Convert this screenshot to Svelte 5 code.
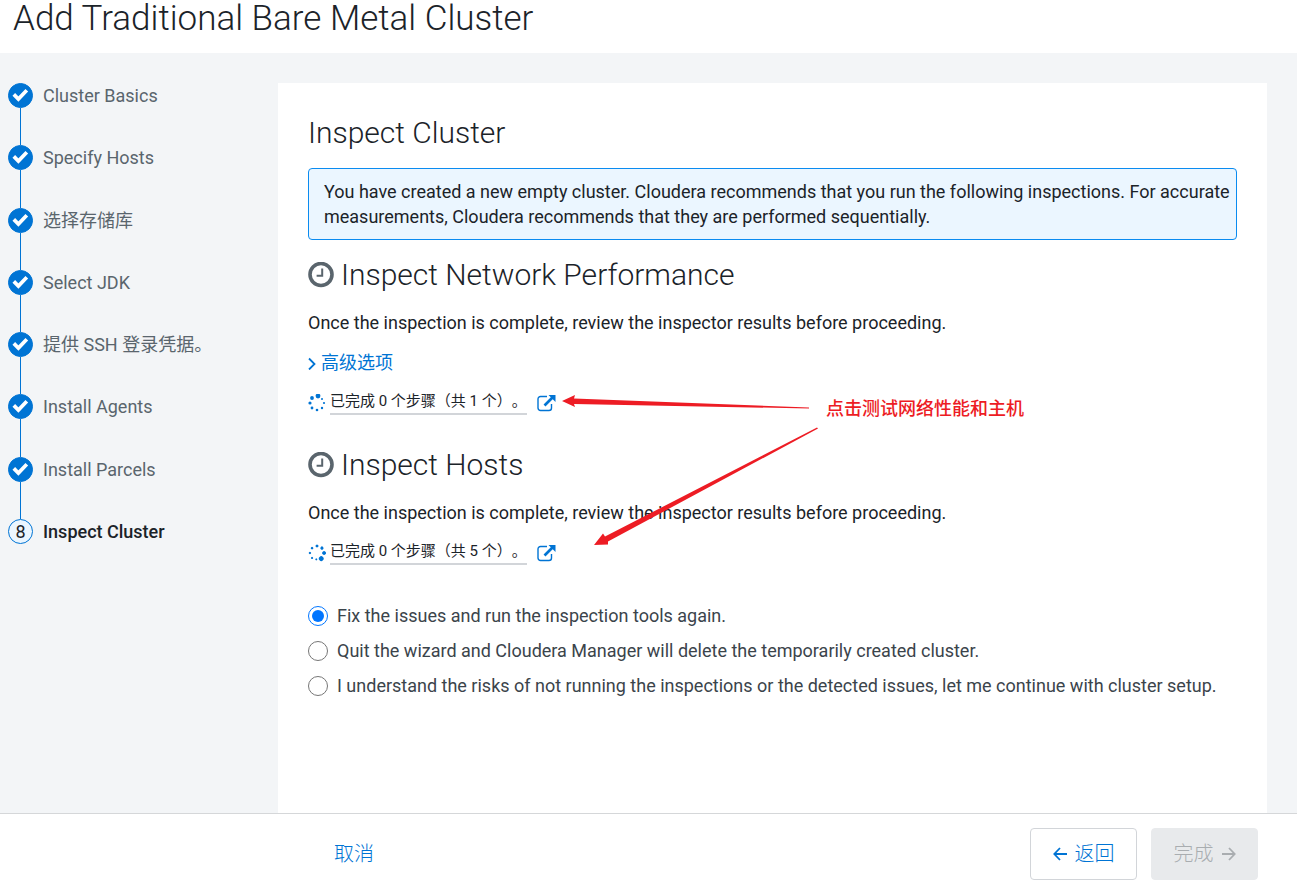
<script>
  const steps = [
    'Cluster Basics',
    'Specify Hosts',
    '选择存储库',
    'Select JDK',
    '提供 SSH 登录凭据。',
    'Install Agents',
    'Install Parcels',
    'Inspect Cluster'
  ];
  const current = steps.length - 1;

  const inspections = [
    { title: 'Inspect Network Performance', advanced: true, total: 1, turn: 0 },
    { title: 'Inspect Hosts', advanced: false, total: 5, turn: 135 }
  ];

  const options = [
    { value: 'fix', label: 'Fix the issues and run the inspection tools again.' },
    { value: 'quit', label: 'Quit the wizard and Cloudera Manager will delete the temporarily created cluster.' },
    { value: 'continue', label: 'I understand the risks of not running the inspections or the detected issues, let me continue with cluster setup.' }
  ];

  // x, y, radius of each spinner dot, clockwise from the top
  const dots = [
    [10, 2, 2.4], [14, 5, 1], [16, 9, 1.1], [14, 14, 1.2],
    [9, 16, 1.3], [4, 14, 1.4], [2, 9, 1.6], [4, 4, 1.9]
  ];

  let choice = $state('fix');
</script>

<div class="page">
  <header>
    <h1>Add Traditional Bare Metal Cluster</h1>
  </header>

  <main>
    <nav>
      <ol class="steps">
        {#each steps as step, i}
          <li class="step" class:active={i === current}>
            <span class="marker">
              {#if i < current}
                <svg width="17" height="17" viewBox="0 0 17 17">
                  <path d="M1.8 7.4l4.600 4.700 8.400-8.800" fill="none" stroke="#fff" stroke-width="3.700" />
                </svg>
              {:else}
                {i + 1}
              {/if}
            </span>
            <span class="step-name">{step}</span>
          </li>
        {/each}
      </ol>
    </nav>

    <section class="card">
      <h2>Inspect Cluster</h2>
      <p class="notice">
        You have created a new empty cluster. Cloudera recommends that you run the following inspections. For accurate measurements, Cloudera recommends that they are performed sequentially.
      </p>

      {#each inspections as item}
        <div class="inspection">
          <h2>
            <svg class="clock" width="26" height="26" viewBox="0 0 26 26" fill="none" stroke="#5a656d">
              <circle cx="13" cy="12.5" r="11" stroke-width="3.600" />
              <path d="M14.200 6.500v7.200H8.600" stroke-width="2" />
            </svg>
            {item.title}
          </h2>
          <p>Once the inspection is complete, review the inspector results before proceeding.</p>
          {#if item.advanced}
            <a class="advanced" href="#advanced">
              <svg width="8" height="14" viewBox="0 0 8 14" fill="none" stroke="currentColor" stroke-width="1.800">
                <path d="M1 2.500L6.500 8 1 13.500" />
              </svg>
              高级选项
            </a>
          {/if}
          <div class="progress">
            <svg width="18" height="18" viewBox="0 0 18 18" fill="#0074d4">
              <g transform="rotate({item.turn} 9 9)">
                {#each dots as [x, y, r]}
                  <circle cx={x} cy={y} {r} />
                {/each}
              </g>
            </svg>
            <span class="status">已完成 0 个步骤（共 {item.total} 个）。</span>
            <a class="open" href="#details" aria-label="Open details">
              <svg width="19" height="18" viewBox="0 0 19 18" fill="none" stroke="currentColor">
                <path d="M10 2.500H3.500a2.500 2.500 0 0 0-2.500 2.500v9a2.500 2.500 0 0 0 2.500 2.500h8.500a2.500 2.500 0 0 0 2.500-2.500V10" stroke-width="1.400" />
                <path d="M7.500 11.500L15.500 3.500" stroke-width="2.600" />
                <path d="M11.500 1H18.500V8z" fill="currentColor" stroke="none" />
              </svg>
            </a>
          </div>
        </div>
      {/each}

      <div class="options">
        {#each options as option}
          <label>
            <input type="radio" name="choice" value={option.value} bind:group={choice} />
            {option.label}
          </label>
        {/each}
      </div>

      <div class="annotation">
        <svg width="260" height="154" viewBox="0 0 260 154" fill="#ed1c24">
          <path d="M0 8L13 2L12 5.500L247 14.500V15.500L12 11L13 14z" />
          <path d="M32 152L41 140.500L43 143.500L255 34.500L256 35.500L46 148.500L46 151.500z" />
        </svg>
        <span>点击测试网络性能和主机</span>
      </div>
    </section>
  </main>

  <footer>
    <button class="cancel" type="button">取消</button>
    <div class="actions">
      <button type="button">
        <svg width="14" height="14" viewBox="0 0 14 14" fill="none" stroke="currentColor" stroke-width="1.800">
          <path d="M14 7H1.500M7 1L1.300 7L7 13" />
        </svg>
        返回
      </button>
      <button type="button" disabled>
        完成
        <svg width="14" height="14" viewBox="0 0 14 14" fill="none" stroke="currentColor" stroke-width="1.800">
          <path d="M0 7H12.500M7 1L12.700 7L7 13" />
        </svg>
      </button>
    </div>
  </footer>
</div>

<style>
  :global(body) {
    margin: 0;
  }

  .page {
    display: flex;
    flex-direction: column;
    min-height: 100vh;
    color: #1b2329;
    font-family: Roboto, 'Noto Sans CJK SC', sans-serif;
    font-size: 18px;
    line-height: 25px;
  }

  h1, h2, p, ol {
    margin: 0;
    padding: 0;
  }

  a {
    color: #0074d4;
    text-decoration: none;
  }

  header {
    padding: 0 13px 16px;
  }

  h1 {
    font-size: 35px;
    font-weight: 300;
    line-height: 37px;
  }

  main {
    display: flex;
    flex: 1;
    padding: 30px 30px 0 8px;
    background: #f3f5f7;
  }

  nav {
    flex: 0 0 270px;
  }

  .steps {
    display: flex;
    flex-direction: column;
    height: 461px;
    list-style: none;
  }

  .step {
    position: relative;
    display: flex;
    flex: 1;
    align-items: flex-start;
    gap: 10px;
    color: #5a656d;
  }

  .step:not(:last-child)::before {
    content: '';
    position: absolute;
    top: 25px;
    bottom: 0;
    left: 12px;
    width: 1px;
    background: #0074d4;
  }

  .step.active {
    flex: none;
    color: #1b2329;
  }

  .active .step-name {
    font-weight: 500;
  }

  .marker {
    display: flex;
    align-items: center;
    justify-content: center;
    box-sizing: border-box;
    width: 25px;
    height: 25px;
    border: 1px solid #0074d4;
    border-radius: 50%;
    background: #0074d4;
  }

  .active .marker {
    background: #ebf6ff;
  }

  .card {
    position: relative;
    flex: 1;
    padding: 30px;
    background: #fff;
  }

  h2 {
    display: flex;
    align-items: center;
    gap: 7px;
    font-size: 30px;
    font-weight: 300;
    line-height: 40px;
  }

  .notice {
    margin: 15px 0;
    padding: 10px 5px 10px 15px;
    border: 1px solid #0a8bf0;
    border-radius: 4px;
    background: #ebf6ff;
  }

  .inspection {
    display: flex;
    flex-direction: column;
    align-items: flex-start;
    gap: 15px;
    margin-bottom: 30px;
  }

  .advanced {
    display: flex;
    align-items: center;
    gap: 5px;
  }

  .progress {
    display: flex;
    align-items: center;
    gap: 4px;
    line-height: 23px;
  }

  .status {
    border-bottom: 2px solid #d2d5d9;
    font-size: 15px;
    text-spacing-trim: space-all;
  }

  .open {
    display: flex;
    margin-left: 6px;
  }

  .options {
    display: flex;
    flex-direction: column;
    gap: 10px;
    padding-top: 8px;
  }

  label {
    display: flex;
    align-items: center;
    gap: 9px;
    color: #3b444b;
  }

  input {
    width: 20px;
    height: 20px;
    margin: 0;
    accent-color: #0075ff;
  }

  .annotation {
    position: absolute;
    top: 310px;
    left: 284px;
    display: flex;
    gap: 4px;
    color: #ed1c24;
    font-size: 18px;
    font-weight: 500;
    line-height: 32px;
    pointer-events: none;
  }

  footer {
    display: flex;
    align-items: center;
    justify-content: space-between;
    padding: 14px 39px 10px 334px;
    border-top: 1px solid #d5d7d9;
  }

  button {
    display: flex;
    align-items: center;
    justify-content: center;
    gap: 8px;
    width: 107px;
    height: 52px;
    border: 1px solid #d2d5d9;
    border-radius: 4px;
    background: #fff;
    color: #0074d4;
    font: inherit;
    font-size: 20px;
    font-weight: 300;
  }

  button:disabled {
    border-color: #e8eaec;
    background: #e8eaec;
    color: #a9adb0;
  }

  .cancel {
    width: auto;
    padding: 0;
    border: none;
  }

  .actions {
    display: flex;
    gap: 14px;
  }
</style>
